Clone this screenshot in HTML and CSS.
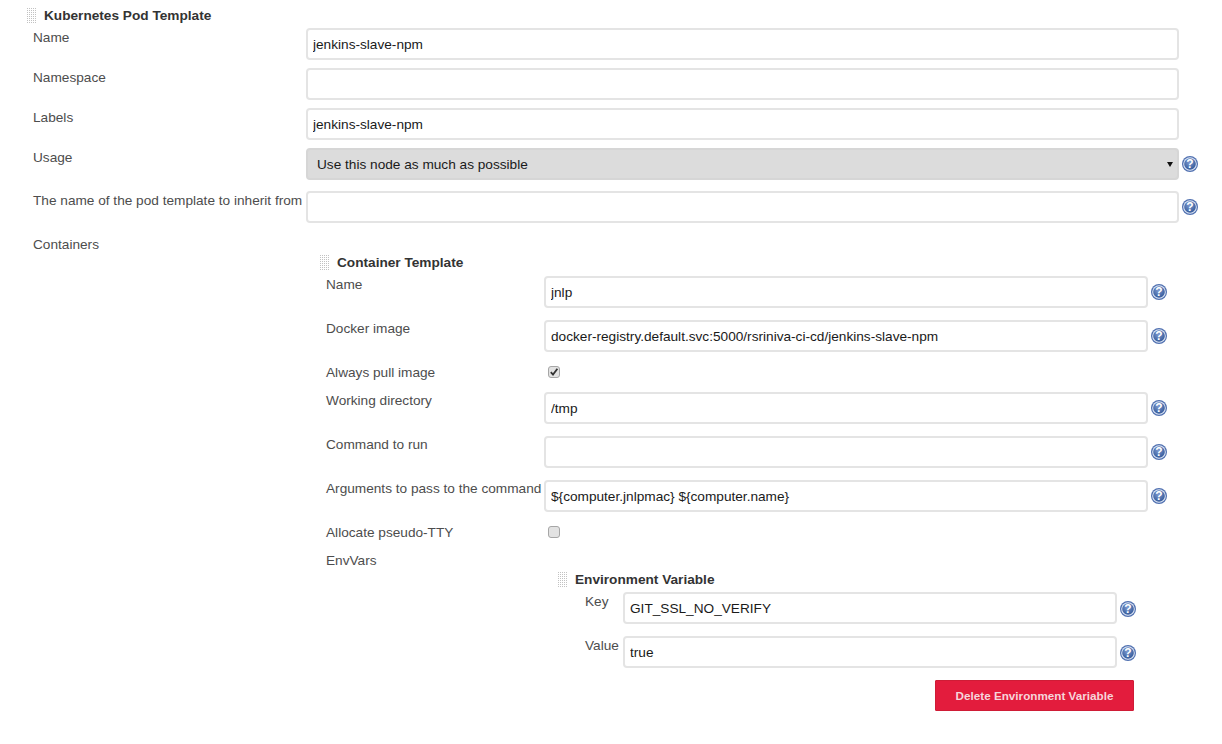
FILE: index.html

```html
<!DOCTYPE html>
<html lang="en">
<head>
  <meta charset="UTF-8">
  <title>Kubernetes Pod Template</title>
  <link rel="stylesheet" href="styles.css">
</head>
<body>
  <svg class="defs" width="0" height="0">
    <defs>
      <radialGradient id="helpFill" cx="45%" cy="35%" r="70%">
        <stop offset="0" stop-color="#7f9bd0"/>
        <stop offset="1" stop-color="#2f5596"/>
      </radialGradient>
      <symbol id="help" viewBox="0 0 16 16">
        <circle cx="8" cy="8" r="8" fill="#4f70b0"/>
        <circle cx="8" cy="8" r="6.8" fill="#dfe7f5"/>
        <circle cx="8" cy="8" r="5.8" fill="url(#helpFill)"/>
        <text x="8" y="12.4" text-anchor="middle" font-family="Liberation Sans" font-weight="bold" font-size="12" fill="#fff">?</text>
      </symbol>
    </defs>
  </svg>

  <section class="block pod">
    <h3 class="block-title"><span class="handle"></span>Kubernetes Pod Template</h3>

    <div class="row row-pod">
      <label>Name</label>
      <input type="text" value="jenkins-slave-npm">
    </div>
    <div class="row row-pod">
      <label>Namespace</label>
      <input type="text">
    </div>
    <div class="row row-pod">
      <label>Labels</label>
      <input type="text" value="jenkins-slave-npm">
    </div>
    <div class="row row-pod">
      <label>Usage</label>
      <select><option>Use this node as much as possible</option></select>
      <svg class="help"><use href="#help"/></svg>
    </div>
    <div class="row row-pod row-inherit">
      <label>The name of the pod template to inherit from</label>
      <input type="text">
      <svg class="help"><use href="#help"/></svg>
    </div>
    <div class="row row-pod row-plain">
      <label>Containers</label>
    </div>

    <section class="block container">
      <h3 class="block-title"><span class="handle"></span>Container Template</h3>

      <div class="row row-container">
        <label>Name</label>
        <input type="text" value="jnlp">
        <svg class="help"><use href="#help"/></svg>
      </div>
      <div class="row row-container">
        <label>Docker image</label>
        <input type="text" value="docker-registry.default.svc:5000/rsriniva-ci-cd/jenkins-slave-npm">
        <svg class="help"><use href="#help"/></svg>
      </div>
      <div class="row row-container row-check">
        <label>Always pull image</label>
        <input type="checkbox" checked>
      </div>
      <div class="row row-container">
        <label>Working directory</label>
        <input type="text" value="/tmp">
        <svg class="help"><use href="#help"/></svg>
      </div>
      <div class="row row-container">
        <label>Command to run</label>
        <input type="text">
        <svg class="help"><use href="#help"/></svg>
      </div>
      <div class="row row-container">
        <label>Arguments to pass to the command</label>
        <input type="text" value="${computer.jnlpmac} ${computer.name}">
        <svg class="help"><use href="#help"/></svg>
      </div>
      <div class="row row-container row-check">
        <label>Allocate pseudo-TTY</label>
        <input type="checkbox">
      </div>
      <div class="row row-container row-plain">
        <label>EnvVars</label>
      </div>

      <section class="block env">
        <h3 class="block-title"><span class="handle"></span>Environment Variable</h3>
        <div class="row row-env">
          <label>Key</label>
          <input type="text" value="GIT_SSL_NO_VERIFY">
          <svg class="help"><use href="#help"/></svg>
        </div>
        <div class="row row-env">
          <label>Value</label>
          <input type="text" value="true">
          <svg class="help"><use href="#help"/></svg>
        </div>
        <div class="actions">
          <button type="button">Delete Environment Variable</button>
        </div>
      </section>
    </section>
  </section>
</body>
</html>
```

FILE: styles.css

```css
html, body {
  margin: 0;
  padding: 0;
  background-color: #fff;
}
body {
  width: 1222px;
  height: 744px;
  overflow: hidden;
  font-family: "Liberation Sans", Arial, sans-serif;
  font-size: 13.65px;
  color: #333;
}
.defs {
  display: block;
  height: 0;
}

.pod {
  padding: 7px 0 0 26px;
}
.container {
  padding: 0 0 0 293px;
}
.env {
  padding: 0 0 0 238px;
}

.block-title {
  display: flex;
  align-items: center;
  height: 17px;
  margin: 0 0 4px;
  font-size: 13.65px;
  line-height: 17px;
  font-weight: bold;
  color: #333;
}
.handle {
  width: 11px;
  height: 16px;
  margin-right: 7px;
  background-image: conic-gradient(#c2c2c2 25%, transparent 0);
  background-size: 2px 2px;
}

.row {
  display: flex;
  align-items: flex-start;
  height: 32px;
  margin-bottom: 8px;
}
.row label {
  flex: none;
  line-height: 18px;
  color: #4d4d4d;
  white-space: nowrap;
}
.row-pod {
  padding-left: 7px;
}
.row-pod label {
  width: 273px;
  padding-top: 1px;
}
.row-pod > input, .row-pod > select {
  width: 873px;
}
.row-inherit {
  margin-top: 11px;
  margin-bottom: 12px;
}
.row-plain {
  height: 18px;
  margin-bottom: 0;
}

.container .block-title {
  margin: 1px 0 5px;
}
.row-container {
  padding-left: 7px;
  margin-bottom: 12px;
}
.row-container label {
  width: 218px;
}
.row-container > input[type=text] {
  width: 604px;
}
.row-check {
  height: 16px;
  align-items: center;
}
.row-check label {
  padding-top: 2px;
}
.row-container.row-plain {
  height: 7px;
  margin-top: 3px;
}
.env .block-title {
  margin: 0 0 4px;
}
.row-env {
  margin-bottom: 12px;
  padding-left: 28px;
}
.row-env label {
  width: 38px;
  padding-top: 1px;
}
.row-env > input {
  width: 494px;
}
.row-env .help {
  margin-top: 9px;
}

input[type=text], select {
  box-sizing: border-box;
  height: 32px;
  padding: 0 5px;
  border: 2px solid #e4e4e4;
  border-radius: 4px;
  background-color: #fff;
  font-family: "Liberation Sans", Arial, sans-serif;
  font-size: 13.65px;
  color: #1a1a1a;
  outline: none;
}
select {
  appearance: none;
  padding: 0 9px;
  background-color: #dcdcdc;
  border-color: #d6d6d6;
  background-image: url("data:image/svg+xml,%3Csvg xmlns='http://www.w3.org/2000/svg' viewBox='0 0 6 6'%3E%3Cpath d='M0 1H6L3 6Z' fill='%23111'/%3E%3C/svg%3E");
  background-repeat: no-repeat;
  background-size: 6px 6px;
  background-position: right 4px center;
}
input[type=checkbox] {
  appearance: none;
  box-sizing: border-box;
  width: 12px;
  height: 12px;
  margin: 0 0 0 4px;
  border: 1px solid #a6a6a6;
  border-radius: 3px;
  background-color: #e2e2e2;
}
input[type=checkbox]:checked {
  background-image: url("data:image/svg+xml,%3Csvg xmlns='http://www.w3.org/2000/svg' viewBox='0 0 10 10'%3E%3Cpath d='M1.8 5.2 4 7.6 8.4 1.8' fill='none' stroke='%23333' stroke-width='1.8'/%3E%3C/svg%3E");
  background-size: 10px 10px;
}

.help {
  flex: none;
  width: 16px;
  height: 16px;
  margin: 8px 0 0 3px;
}

.actions {
  display: flex;
  justify-content: flex-end;
  width: 577px;
}
button {
  width: 199px;
  height: 31px;
  padding: 0;
  border: 1px solid #cf1c36;
  border-radius: 1px;
  background-color: #e31c3d;
  font-family: "Liberation Sans", Arial, sans-serif;
  font-size: 11.7px;
  font-weight: bold;
  color: #f6d5db;
}
```
